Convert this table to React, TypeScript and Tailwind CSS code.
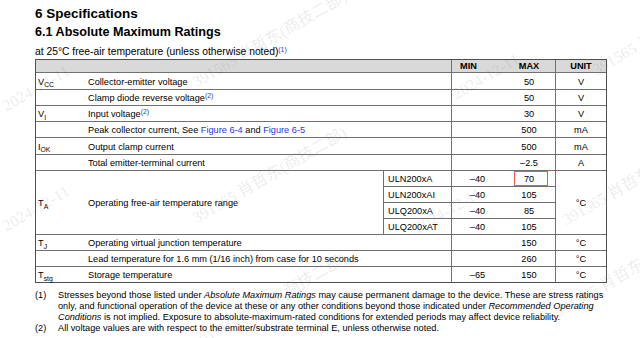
import React from "react";

const blue = "text-[#2437e0]";

function Sub({ children }: { children: React.ReactNode }) {
  return <sub className="text-[6.8px] -bottom-[2.5px]">{children}</sub>;
}
function Sup({ children }: { children: React.ReactNode }) {
  return <sup className={`text-[6.8px] -top-[3.5px] ${blue}`}>{children}</sup>;
}

const B = "border-[#707070]";

type Row = {
  sym?: React.ReactNode;
  desc: React.ReactNode;
  min?: string;
  max: string;
  unit: string;
  last?: boolean;
};

function NormalRow({ r }: { r: Row }) {
  const bb = r.last ? "" : `border-b ${B}`;
  return (
    <>
      <div className={`flex items-center pl-[2px] pt-[2px] ${bb}`}>{r.sym}</div>
      <div className={`col-span-2 flex items-center pl-[2px] pt-[2px] whitespace-nowrap ${bb}`}>{r.desc}</div>
      <div className={`flex items-center justify-center pt-[2px] border-l ${B} ${bb}`}>{r.min}</div>
      <div className={`flex items-center justify-center pt-[2px] ${bb}`}>{r.max}</div>
      <div className={`flex items-center justify-center pt-[2px] border-l ${B} ${bb}`}>{r.unit}</div>
    </>
  );
}

const wmItems: { t: string; x: number; y: number }[] = [
  { t: "2024-12-11", x: 8, y: 114 },
  { t: "2024-12-11", x: 8, y: 234 },
  { t: "391565  肖哲东(商技二部)", x: 198, y: 90 },
  { t: "391565  肖哲东(商技二部)", x: 198, y: 226 },
  { t: "391565  肖哲东(商技二部)", x: 198, y: 352 },
  { t: "2024-12-11", x: 458, y: 102 },
  { t: "2024-12-11", x: 420, y: 236 },
  { t: "391565  肖哲东(商技二部)", x: 598, y: 78 },
  { t: "391565  肖哲东(商技二部)", x: 568, y: 228 },
  { t: "391565  肖哲东(商技二部)", x: 560, y: 320 },
];

export default function App() {
  const rows1: Row[] = [
    { sym: <span>V<Sub>CC</Sub></span>, desc: "Collector-emitter voltage", max: "50", unit: "V" },
    { desc: <span>Clamp diode reverse voltage<Sup>(2)</Sup></span>, max: "50", unit: "V" },
    { sym: <span>V<Sub>I</Sub></span>, desc: <span>Input voltage<Sup>(2)</Sup></span>, max: "30", unit: "V" },
    {
      desc: (
        <span>
          Peak collector current, See <span className={blue}>Figure 6-4</span> and{" "}
          <span className={blue}>Figure 6-5</span>
        </span>
      ),
      max: "500",
      unit: "mA",
    },
    { sym: <span>I<Sub>OK</Sub></span>, desc: "Output clamp current", max: "500", unit: "mA" },
    { desc: "Total emitter-terminal current", max: "–2.5", unit: "A" },
  ];
  const rows2: Row[] = [
    { sym: <span>T<Sub>J</Sub></span>, desc: "Operating virtual junction temperature", max: "150", unit: "°C" },
    { desc: "Lead temperature for 1.6 mm (1/16 inch) from case for 10 seconds", max: "260", unit: "°C" },
    { sym: <span>T<Sub>stg</Sub></span>, desc: "Storage temperature", min: "–65", max: "150", unit: "°C", last: true },
  ];
  const ta = [
    { d: "ULN200xA", min: "–40", max: "70", box: true },
    { d: "ULN200xAI", min: "–40", max: "105" },
    { d: "ULQ200xA", min: "–40", max: "85" },
    { d: "ULQ200xAT", min: "–40", max: "105" },
  ];

  return (
    <div className="relative w-[640px] h-[338px] overflow-hidden bg-white text-black font-['Liberation_Sans','Arial',sans-serif]">
      <div className="pl-[35px] pt-[6px]">
        <h1 className="text-[13.5px] font-bold leading-[16px]">6 Specifications</h1>
        <h2 className="mt-[2px] text-[12.6px] font-bold leading-[16px]">6.1 Absolute Maximum Ratings</h2>
        <p className="mt-[6px] text-[10.3px] leading-[12px] whitespace-nowrap">
          at 25°C free-air temperature (unless otherwise noted)<Sup>(1)</Sup>
        </p>

        <div
          className={`mt-[1px] grid w-[572px] border border-[#505050] text-[9.2px] leading-[11px] grid-cols-[50px_297px_68px_52px_52px_51px] grid-rows-[13px_17px_16px_16px_16px_17px_16px_16px_16px_16px_16px_16px_16px_15px]`}
        >
          {/* header */}
          <div className={`col-span-3 bg-[#d9d9d9] border-b ${B}`}></div>
          <div className={`bg-[#d9d9d9] border-b border-l ${B} flex items-center justify-center pr-[18px] pt-[1px] font-bold`}>MIN</div>
          <div className={`bg-[#d9d9d9] border-b ${B} flex items-center justify-center pt-[1px] font-bold`}>MAX</div>
          <div className={`bg-[#d9d9d9] border-b border-l ${B} flex items-center justify-center pt-[1px] font-bold`}>UNIT</div>

          {rows1.map((r, i) => (
            <NormalRow key={"a" + i} r={r} />
          ))}

          {/* T_A block */}
          <div className={`row-span-4 flex items-center pl-[2px] pt-[2px] border-b ${B}`}>
            <span>T<Sub>A</Sub></span>
          </div>
          <div className={`row-span-4 flex items-center pl-[2px] pt-[2px] border-b ${B}`}>
            Operating free-air temperature range
          </div>
          {ta.map((t, i) => (
            <React.Fragment key={"t" + i}>
              <div className={`flex items-center pl-[4px] pt-[2px] border-l border-b ${B}`}>{t.d}</div>
              <div className={`flex items-center justify-center pt-[2px] border-l border-b ${B}`}>{t.min}</div>
              <div className={`relative flex items-center justify-center pt-[2px] border-b ${B}`}>
                {t.max}
                {t.box && (
                  <span className="absolute left-[11px] top-[0px] w-[34px] h-[15px] border border-[#ec5a48]"></span>
                )}
              </div>
              {i === 0 && (
                <div className={`row-span-4 flex items-center justify-center pt-[2px] border-l border-b ${B}`}>°C</div>
              )}
            </React.Fragment>
          ))}

          {rows2.map((r, i) => (
            <NormalRow key={"b" + i} r={r} />
          ))}
        </div>

        <div className="mt-[7px] text-[9.2px] leading-[11px] whitespace-nowrap">
          <div className="flex">
            <span className="w-[23px] shrink-0">(1)</span>
            <div>
              Stresses beyond those listed under <i>Absolute Maximum Ratings</i> may cause permanent damage to the device. These are stress ratings
              <br />
              only, and functional operation of the device at these or any other conditions beyond those indicated under <i>Recommended Operating</i>
              <br />
              <i>Conditions</i> is not implied. Exposure to absolute-maximum-rated conditions for extended periods may affect device reliability.
            </div>
          </div>
          <div className="flex">
            <span className="w-[23px] shrink-0">(2)</span>
            <div>All voltage values are with respect to the emitter/substrate terminal E, unless otherwise noted.</div>
          </div>
        </div>
      </div>

      {/* watermark overlay */}
      <div className="pointer-events-none absolute inset-0">
        {wmItems.map((w, i) => (
          <span
            key={i}
            className="absolute whitespace-nowrap origin-bottom-left -rotate-[30deg] text-[16px] leading-[16px] text-[rgba(120,120,120,0.15)] font-['Liberation_Serif','Noto_Sans_CJK_SC',serif]"
            style={{ left: w.x, top: w.y - 16 }}
          >
            {w.t}
          </span>
        ))}
      </div>
    </div>
  );
}
